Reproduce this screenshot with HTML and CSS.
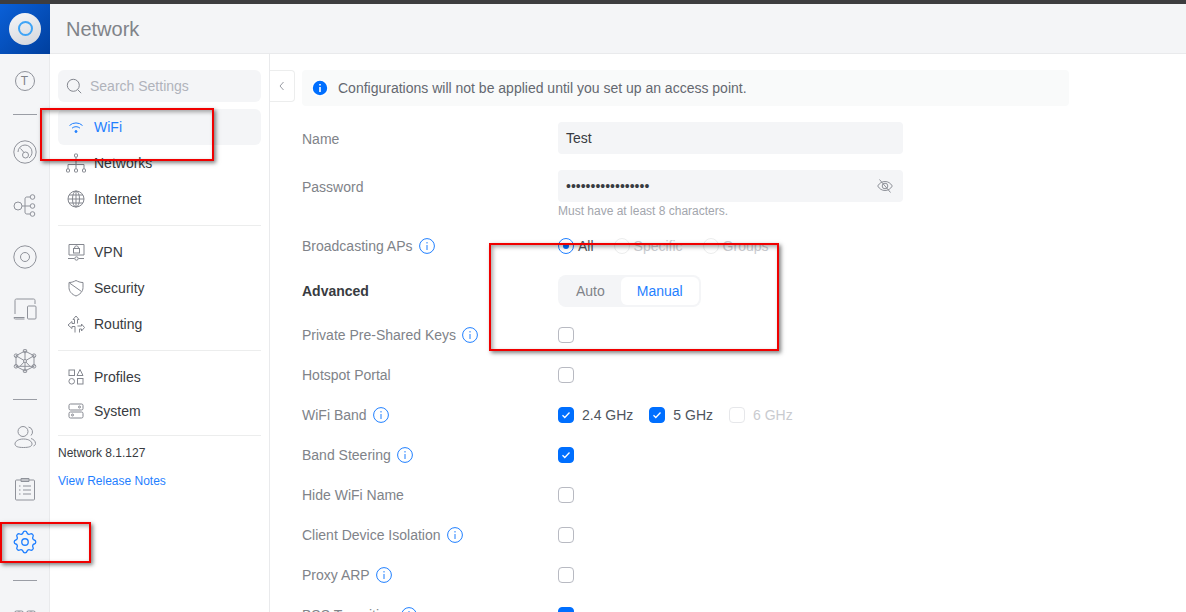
FILE: index.html
```html
<!DOCTYPE html>
<html lang="en">
    <head>
        <meta charset="UTF-8" />
        <title>Network</title>
        <link rel="stylesheet" href="styles.css">
    </head>

    <body>
        <div class="top_strip"></div>
        <header class="top_bar">
            <div class="logo"><span class="logo_disc"><span class="logo_ring"></span></span></div>
            <h1 class="page_title">Network</h1>
        </header>

        <div class="app_body">
            <nav class="rail">
                <div class="rail_item"><span class="avatar">T</span></div>
                <hr class="rail_line first">
                <div class="rail_item">
                    <svg class="rail_ico" viewBox="0 0 24 24"><circle cx="12" cy="12" r="11.200"/><path d="M5 12a7 7 0 0 1 14 0c0 2.500-1 4.500-3 6M7.500 8.500l3.500 4"/><circle cx="12.500" cy="15" r="3"/></svg>
                </div>
                <div class="rail_item push">
                    <svg class="rail_ico" viewBox="0 0 24 24"><circle cx="5" cy="13" r="4"/><circle cx="19.500" cy="4" r="2.300"/><circle cx="19.500" cy="13" r="2.300"/><circle cx="19.500" cy="21" r="2.300"/><path d="M9 13h8M12 13V6c0-1.500.8-2 2-2h3M12 13v6c0 1.500.8 2 2 2h3"/></svg>
                </div>
                <div class="rail_item">
                    <svg class="rail_ico" viewBox="0 0 24 24"><circle cx="12" cy="12" r="11.200"/><circle cx="12" cy="12" r="4.500"/></svg>
                </div>
                <div class="rail_item">
                    <svg class="rail_ico" viewBox="0 0 24 24"><path d="M2 17V3.500C2 2.500 2.500 2 3.500 2h17c1 0 1.500.5 1.500 1.500V7M1 20.500h10.500M1 20.500c0 1 .5 1.500 1.500 1.500h9"/><rect x="14.500" y="9" width="8.500" height="13" rx="1"/></svg>
                </div>
                <div class="rail_item">
                    <svg class="rail_ico" viewBox="0 0 24 24"><path d="M12 2l9 4.700v10.600L12 22l-9-4.700V6.700zM12 2v10M21 6.700L12 12M3 6.700L12 12M12 12l-5 5.300M12 12l5 5.300M3 17.300h18M12 12v10"/><circle cx="12" cy="2" r="1.800"/><circle cx="21" cy="6.700" r="1.800"/><circle cx="21" cy="17.300" r="1.800"/><circle cx="12" cy="22" r="1.800"/><circle cx="3" cy="17.300" r="1.800"/><circle cx="3" cy="6.700" r="1.800"/><circle class="node" cx="12" cy="12" r="1.500"/></svg>
                </div>
                <hr class="rail_line">
                <div class="rail_item">
                    <svg class="rail_ico" viewBox="0 0 24 24"><circle cx="10" cy="6.500" r="5"/><path d="M15.500 2a5 5 0 0 1 2.500 8.500M10.500 14C5 14 2 16.500 2 19c0 2.500 3 3.500 8.500 3.500S19 21.500 19 19c0-2.500-3-5-8.500-5zM18 13.500c2.500.8 4.500 2.500 4.500 5 0 1-.5 2-2 2.500"/></svg>
                </div>
                <div class="rail_item">
                    <svg class="rail_ico" viewBox="0 0 24 24"><rect x="2.500" y="3" width="19" height="20" rx="1"/><path d="M8 3V1.500h8V3M8 3v1.500h8V3M6 9h1.500M10 9h8M6 13h1.500M10 13h8M6 17h1.500M10 17h8"/></svg>
                </div>
                <div class="rail_item push">
                    <svg class="rail_ico gear" viewBox="2 2 20 20"><path d="M10.325 4.317c.426-1.756 2.924-1.756 3.350 0a1.724 1.724 0 0 0 2.573 1.066c1.543-.94 3.310.826 2.370 2.370a1.724 1.724 0 0 0 1.065 2.572c1.756.426 1.756 2.924 0 3.350a1.724 1.724 0 0 0-1.066 2.573c.94 1.543-.826 3.310-2.370 2.370a1.724 1.724 0 0 0-2.572 1.065c-.426 1.756-2.924 1.756-3.350 0a1.724 1.724 0 0 0-2.573-1.066c-1.543.94-3.310-.826-2.370-2.370a1.724 1.724 0 0 0-1.065-2.572c-1.756-.426-1.756-2.924 0-3.350a1.724 1.724 0 0 0 1.066-2.573c-.94-1.543.826-3.310 2.370-2.370c1 .608 2.296.07 2.572-1.065z"/><circle cx="12" cy="12" r="2.700"/></svg>
                </div>
                <hr class="rail_line last">
                <div class="rail_item">
                    <svg class="rail_ico" viewBox="0 0 24 24"><rect x="1.500" y="3" width="9" height="9" rx="2"/><rect x="13.500" y="3" width="9" height="9" rx="2"/><path d="M6 3v9M18 3v9"/></svg>
                </div>
            </nav>

            <aside class="side_menu">
                <div class="search_box">
                    <svg class="nav_ico" viewBox="0 0 16 16"><circle cx="7.300" cy="7.300" r="6"/><path d="M11.700 11.700l3.500 3.500"/></svg>
                    <span>Search Settings</span>
                </div>
                <a class="nav_item on">
                    <svg class="nav_ico" viewBox="0 0 20 20"><path d="M3.500 8.500a9.500 9.500 0 0 1 13 0M6 11.200a6 6 0 0 1 8 0"/><circle cx="10" cy="14.500" r="1"/></svg>
                    WiFi
                </a>
                <a class="nav_item">
                    <svg class="nav_ico" viewBox="0 0 20 20"><rect x="8.500" y="1" width="3" height="3" rx=".6"/><rect x="0.500" y="16" width="3" height="3" rx=".6"/><rect x="8.500" y="16" width="3" height="3" rx=".6"/><rect x="16.500" y="16" width="3" height="3" rx=".6"/><path d="M10 4v12M2 16v-4.500h16V16"/></svg>
                    Networks
                </a>
                <a class="nav_item">
                    <svg class="nav_ico" viewBox="0 0 20 20"><circle cx="10" cy="10" r="8"/><ellipse cx="10" cy="10" rx="3.500" ry="8"/><path d="M2 10h16M3 6h14M3 14h14M10 2v16"/></svg>
                    Internet
                </a>
                <hr class="side_line">
                <a class="nav_item">
                    <svg class="nav_ico" viewBox="0 0 20 20"><path d="M3 13V2.500h15V13z"/><rect x="7.500" y="6.500" width="6" height="4.500"/><path d="M8.700 6.500V5a2 2 0 0 1 3.600 0v1.500M2 16.500h6.500M12.500 16.500H18"/><circle cx="10.500" cy="16.500" r="1.700"/></svg>
                    VPN
                </a>
                <a class="nav_item">
                    <svg class="nav_ico" viewBox="0 0 20 20"><path d="M3 4.500c3 0 5-1 7-2 2 1 4 2 7 2v5c0 4-3 7-7 8.500-4-1.500-7-4.500-7-8.500zM3.500 5l12 8.500"/></svg>
                    Security
                </a>
                <a class="nav_item">
                    <svg class="nav_ico" viewBox="0 0 20 20"><path d="M2 11l4-3.500v2h2.500v-4H7L10 2l3 3.500h-1.500v4M2 11l4 3.500v-2h3v6M11.500 12h4v-2l3 3.500-3 3.500v-2h-2v3.500"/></svg>
                    Routing
                </a>
                <hr class="side_line roomy">
                <a class="nav_item short">
                    <svg class="nav_ico" viewBox="0 0 20 20"><rect x="3" y="3" width="5.500" height="5.500"/><path d="M14 2.500l3 6h-6z"/><circle cx="5.700" cy="14.300" r="2.800"/><rect x="11.500" y="11.500" width="5.500" height="5.500"/></svg>
                    Profiles
                </a>
                <a class="nav_item short">
                    <svg class="nav_ico" viewBox="0 0 20 20"><rect x="3" y="3" width="14" height="6" rx="1.500"/><rect x="3" y="11" width="14" height="6" rx="1.500"/><circle cx="13.500" cy="6" r="1"/><circle cx="6.500" cy="14" r="1"/></svg>
                    System
                </a>
                <hr class="side_line tight">
                <p class="version">Network 8.1.127</p>
                <a class="release">View Release Notes</a>
            </aside>

            <main class="content">
                <button class="collapse">
                    <svg viewBox="0 0 10 12"><path d="M6.500 2L3 6l3.500 4"/></svg>
                </button>
                <div class="settings">
                    <div class="notice">
                        <svg class="notice_ico" viewBox="0 0 16 16"><circle cx="8" cy="8" r="8"/><path d="M8 7v5M8 4v1.600"/></svg>
                        Configurations will not be applied until you set up an access point.
                    </div>

                    <div class="field">
                        <label class="lbl">Name</label>
                        <div class="input">Test</div>
                    </div>
                    <div class="field">
                        <label class="lbl">Password</label>
                        <div class="input dots">
                            •••••••••••••••••
                            <svg class="eye" viewBox="0 0 16 16"><path d="M.7 8C2.500 5 5 3.500 8 3.500S13.500 5 15.300 8c-1.800 3-4.300 4.500-7.300 4.500S2.500 11 .7 8z"/><circle cx="8" cy="8" r="2.800"/><path d="M2.500 1.500l11 13"/></svg>
                        </div>
                    </div>
                    <p class="hint">Must have at least 8 characters.</p>

                    <div class="row radio_row">
                        <label class="lbl">Broadcasting APs <svg class="info" viewBox="0 0 16 16"><circle cx="8" cy="8" r="7.400"/><path d="M8 7v5M8 4v1.500"/></svg></label>
                        <div class="opts">
                            <span class="opt"><i class="radio on"></i>All</span>
                            <span class="opt off"><i class="radio"></i>Specific</span>
                            <span class="opt off"><i class="radio"></i>Groups</span>
                        </div>
                    </div>
                    <div class="row adv_row">
                        <label class="lbl strong">Advanced</label>
                        <div class="segment">
                            <span class="seg">Auto</span>
                            <span class="seg on">Manual</span>
                        </div>
                    </div>
                    <div class="row">
                        <label class="lbl">Private Pre-Shared Keys <svg class="info" viewBox="0 0 16 16"><circle cx="8" cy="8" r="7.400"/><path d="M8 7v5M8 4v1.500"/></svg></label>
                        <i class="check"></i>
                    </div>
                    <div class="row">
                        <label class="lbl">Hotspot Portal</label>
                        <i class="check"></i>
                    </div>
                    <div class="row">
                        <label class="lbl">WiFi Band <svg class="info" viewBox="0 0 16 16"><circle cx="8" cy="8" r="7.400"/><path d="M8 7v5M8 4v1.500"/></svg></label>
                        <div class="opts bands">
                            <span class="opt"><i class="check on"><svg viewBox="0 0 16 16"><path d="M4.500 8.300l2.300 2.200 4.700-5"/></svg></i>2.4 GHz</span>
                            <span class="opt"><i class="check on"><svg viewBox="0 0 16 16"><path d="M4.500 8.300l2.300 2.200 4.700-5"/></svg></i>5 GHz</span>
                            <span class="opt off"><i class="check dis"></i>6 GHz</span>
                        </div>
                    </div>
                    <div class="row">
                        <label class="lbl">Band Steering <svg class="info" viewBox="0 0 16 16"><circle cx="8" cy="8" r="7.400"/><path d="M8 7v5M8 4v1.500"/></svg></label>
                        <i class="check on"><svg viewBox="0 0 16 16"><path d="M4.500 8.300l2.300 2.200 4.700-5"/></svg></i>
                    </div>
                    <div class="row">
                        <label class="lbl">Hide WiFi Name</label>
                        <i class="check"></i>
                    </div>
                    <div class="row">
                        <label class="lbl">Client Device Isolation <svg class="info" viewBox="0 0 16 16"><circle cx="8" cy="8" r="7.400"/><path d="M8 7v5M8 4v1.500"/></svg></label>
                        <i class="check"></i>
                    </div>
                    <div class="row">
                        <label class="lbl">Proxy ARP <svg class="info" viewBox="0 0 16 16"><circle cx="8" cy="8" r="7.400"/><path d="M8 7v5M8 4v1.500"/></svg></label>
                        <i class="check"></i>
                    </div>
                    <div class="row">
                        <label class="lbl">BSS Transition <svg class="info" viewBox="0 0 16 16"><circle cx="8" cy="8" r="7.400"/><path d="M8 7v5M8 4v1.500"/></svg></label>
                        <i class="check on"><svg viewBox="0 0 16 16"><path d="M4.500 8.300l2.300 2.200 4.700-5"/></svg></i>
                    </div>
                </div>
            </main>
        </div>

        <!-- red marks drawn over the screenshot -->
        <div class="mark mark_wifi"></div>
        <div class="mark mark_adv"></div>
        <div class="mark mark_gear"></div>
    </body>
</html>
```

FILE: styles.css
```css
* {
    box-sizing: border-box;
    padding: 0;
    margin: 0;
}
html,
body {
    height: 612px;
    overflow: hidden;
}
body {
    position: relative;
    font-family: "Liberation Sans", Arial, sans-serif;
    font-size: 14px;
    color: #383b41;
    background-color: white;
}
.top_strip {
    height: 4px;
    background-color: #3d3d3f;
}
.top_bar {
    display: flex;
    align-items: center;
    height: 50px;
    background-color: #f4f5f7;
    border-bottom: 1px solid #e9eaec;
}
.logo {
    display: flex;
    justify-content: center;
    align-items: center;
    width: 50px;
    height: 50px;
    background: linear-gradient(135deg, #0a60d8, #003f9e);
}
.logo_disc {
    display: flex;
    justify-content: center;
    align-items: center;
    width: 32px;
    height: 32px;
    border-radius: 50%;
    background: linear-gradient(160deg, #f5f6f8, #d3d6dc);
}
.logo_ring {
    width: 15px;
    height: 15px;
    border: 2px solid #3fa4f6;
    border-radius: 50%;
}
.page_title {
    margin-left: 16px;
    padding-top: 2px;
    font-size: 20px;
    font-weight: normal;
    color: #808389;
}
.app_body {
    display: flex;
    height: 558px;
}

/* left icon rail */
.rail {
    flex: none;
    width: 50px;
    padding-top: 1px;
    background-color: #f4f5f7;
    border-right: 1px solid #e9eaec;
}
.rail_item {
    display: flex;
    justify-content: center;
    align-items: center;
    height: 52px;
}
.rail_item.push {
    margin-top: 1px;
}
.rail_ico {
    width: 24px;
    height: 24px;
    fill: none;
    stroke: #8f929a;
    stroke-width: 1;
}
.rail_ico .node {
    fill: #f4f5f7;
}
.rail_ico.gear {
    stroke: #1f7fff;
    stroke-width: 1.1;
}
.avatar {
    display: flex;
    justify-content: center;
    align-items: center;
    width: 20px;
    height: 20px;
    border: 1px solid #8f929a;
    border-radius: 50%;
    font-size: 12px;
    color: #808389;
}
.rail_line {
    width: 24px;
    height: 1px;
    margin: 12px auto 11px;
    border: 0;
    background-color: #9a9da5;
}
.rail_line.first {
    margin-top: 7px;
}
.rail_line.last {
    margin-top: 12px;
    margin-bottom: 13px;
}

/* settings menu */
.side_menu {
    flex: none;
    width: 220px;
    padding: 16px 8px 0;
    border-right: 1px solid #e9eaec;
}
.search_box {
    display: flex;
    align-items: center;
    gap: 8px;
    height: 32px;
    padding-left: 8px;
    margin-bottom: 7px;
    border-radius: 6px;
    background-color: #f4f5f7;
    color: #b0b3bb;
}
.search_box .nav_ico {
    width: 16px;
    height: 16px;
}
.nav_item {
    display: flex;
    align-items: center;
    gap: 8px;
    height: 36px;
    padding-left: 8px;
    border-radius: 6px;
}
.nav_item.short {
    height: 34px;
}
.nav_item.on {
    background-color: #f4f5f7;
    color: #1f7fff;
}
.nav_item.on .nav_ico {
    stroke: #1f7fff;
}
.nav_item.on .nav_ico circle {
    fill: #1f7fff;
}
.nav_ico {
    flex: none;
    width: 20px;
    height: 20px;
    fill: none;
    stroke: #84878f;
    stroke-width: 1;
}
.side_line {
    height: 1px;
    margin: 8px 0 8px;
    border: 0;
    background-color: #eceded;
}
.side_line.roomy {
    margin-bottom: 9px;
}
.side_line.tight {
    margin: 7px 0 10px;
}
.version {
    font-size: 12px;
    line-height: 14px;
}
.release {
    display: block;
    margin-top: 14px;
    font-size: 12px;
    line-height: 14px;
    color: #1f7fff;
}

/* main panel */
.content {
    flex: 1;
    display: flex;
    align-items: flex-start;
    gap: 7px;
    padding-top: 16px;
}
.collapse {
    flex: none;
    display: flex;
    justify-content: center;
    align-items: center;
    width: 25px;
    height: 32px;
    background-color: white;
    border: 1px solid #eceded;
    border-left: 0;
    border-radius: 0 4px 4px 0;
}
.collapse svg {
    width: 10px;
    height: 12px;
    fill: none;
    stroke: #9a9da5;
    stroke-width: 1;
}
.settings {
    width: 767px;
}
.notice {
    display: flex;
    align-items: center;
    gap: 10px;
    height: 36px;
    padding-left: 10px;
    margin-bottom: 16px;
    border-radius: 4px;
    background-color: #f9fafa;
    color: #646870;
}
.notice_ico {
    flex: none;
    width: 16px;
    height: 16px;
    fill: #006fff;
    stroke: white;
    stroke-width: 1.600;
}
.field {
    display: flex;
    align-items: center;
    margin-bottom: 16px;
}
.lbl {
    flex: none;
    display: flex;
    align-items: center;
    gap: 6px;
    width: 256px;
    color: #808389;
}
.field .lbl {
    padding-top: 2px;
}
.lbl.strong {
    font-weight: bold;
    color: #383b41;
}
.input {
    display: flex;
    justify-content: space-between;
    align-items: center;
    width: 345px;
    height: 32px;
    padding: 0 10px 0 8px;
    border-radius: 4px;
    background-color: #f4f5f7;
}
.eye {
    width: 16px;
    height: 16px;
    fill: none;
    stroke: #8f929a;
    stroke-width: 1;
}
.hint {
    margin: -16px 0 0 256px;
    padding-top: 2px;
    font-size: 12px;
    line-height: 14px;
    color: #a3a6ad;
}
.row {
    display: flex;
    align-items: center;
    height: 40px;
}
.radio_row {
    margin-top: 8px;
    margin-bottom: 9px;
}
.adv_row {
    height: 32px;
    margin-bottom: 8px;
}
.info {
    flex: none;
    width: 16px;
    height: 16px;
    fill: none;
    stroke: #1f7fff;
    stroke-width: 1;
}
.opts {
    display: flex;
    gap: 20px;
}
.opts.bands {
    gap: 16px;
}
.opt {
    display: flex;
    align-items: center;
    gap: 4px;
    color: #50565e;
}
.bands .opt {
    gap: 8px;
}
.opt.off {
    color: #c9cbd0;
}
.radio {
    display: flex;
    justify-content: center;
    align-items: center;
    width: 16px;
    height: 16px;
    border: 1px solid #eceded;
    border-radius: 50%;
}
.radio.on {
    border-color: #1f7fff;
}
.radio.on::after {
    content: "";
    width: 6px;
    height: 6px;
    border-radius: 50%;
    background-color: #006fff;
}
.check {
    flex: none;
    display: block;
    width: 16px;
    height: 16px;
    border: 1px solid #b8bac2;
    border-radius: 4px;
}
.check.on {
    border-color: #006fff;
    background-color: #006fff;
}
.check.on svg {
    display: block;
    width: 16px;
    height: 16px;
    margin: -1px;
    fill: none;
    stroke: white;
    stroke-width: 1.300;
}
.check.dis {
    border-color: #e6e7ea;
}
.segment {
    display: flex;
    height: 32px;
    padding: 2px;
    border-radius: 8px;
    background-color: #f4f5f7;
}
.seg {
    display: flex;
    align-items: center;
    padding: 0 16px;
    border-radius: 6px;
    color: #808389;
}
.seg.on {
    background-color: white;
    color: #1f7fff;
}

/* annotation rectangles */
.mark {
    position: absolute;
    border: 2px solid #f00000;
    box-shadow: 2px 2px 4px rgba(0, 0, 0, 0.5), inset 2px 2px 4px rgba(0, 0, 0, 0.35);
}
.mark_wifi {
    left: 40px;
    top: 108px;
    width: 174px;
    height: 53px;
}
.mark_adv {
    left: 489px;
    top: 243px;
    width: 290px;
    height: 108px;
}
.mark_gear {
    left: 0;
    top: 522px;
    width: 91px;
    height: 41px;
}
```
